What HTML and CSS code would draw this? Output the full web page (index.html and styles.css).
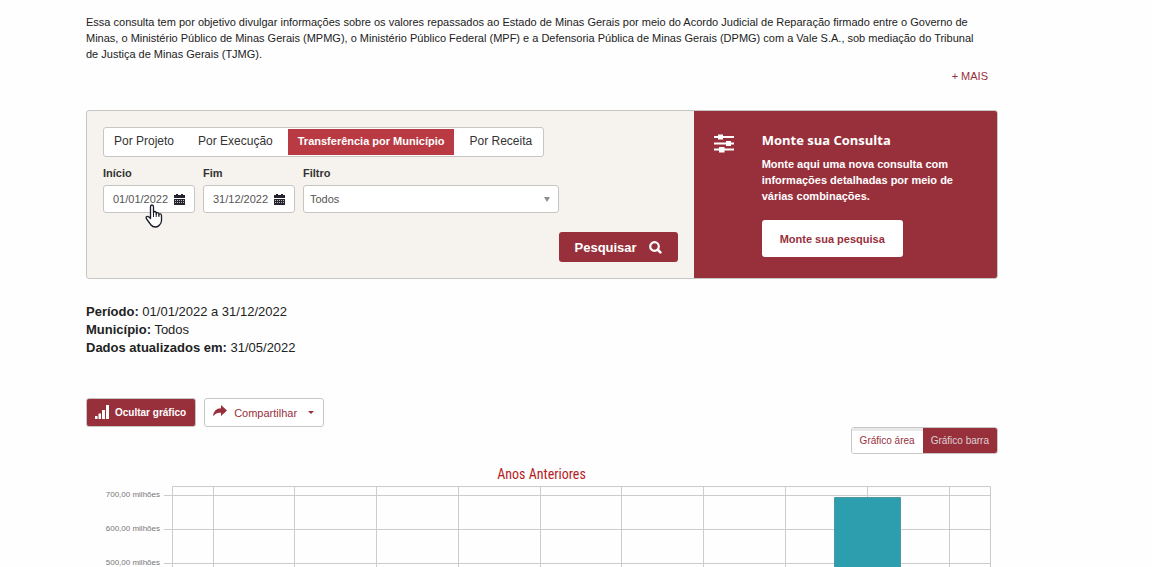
FILE: index.html
```html
<!DOCTYPE html>
<html lang="pt-BR">
<head>
<meta charset="utf-8">
<title>Transferência por Município</title>
<link rel="stylesheet" href="styles.css">
</head>
<body>
<main class="page">
  <p class="intro">Essa consulta tem por objetivo divulgar informações sobre os valores repassados ao Estado de Minas Gerais por meio do Acordo Judicial de Reparação firmado entre o Governo de Minas, o Ministério Público de Minas Gerais (MPMG), o Ministério Público Federal (MPF) e a Defensoria Pública de Minas Gerais (DPMG) com a Vale S.A., sob mediação do Tribunal de Justiça de Minas Gerais (TJMG).</p>
  <a class="more" href="#mais">+ MAIS</a>

  <section class="panel">
    <form class="search">
      <nav class="tabs">
        <a class="tab" href="#projeto">Por Projeto</a>
        <a class="tab" href="#execucao">Por Execução</a>
        <a class="tab tab-active" href="#municipio">Transferência por Município</a>
        <a class="tab" href="#receita">Por Receita</a>
      </nav>
      <div class="fields">
        <div class="field">
          <label for="inicio">Início</label>
          <div class="control date">
            <input id="inicio" type="text" value="01/01/2022">
            <svg class="calendar" viewBox="0 0 11 11" aria-hidden="true"><path d="M0 1h2V0h2v1h3V0h2v1h2v3H0zM0 5h11v6H0z" fill="#24242e"/><path d="M1 6.500h9M1 8.500h9" stroke="#b9b3b5" stroke-width="1" stroke-dasharray="1 1"/></svg>
          </div>
          <svg class="pointer" viewBox="0 0 18 24" aria-hidden="true"><path d="M5.500 14.500V3Q5.500 1 7 1t1.500 2v6q0-1.500 1.300-1.500T11.200 9v1q.1-1.400 1.300-1.400T13.900 10v1q.2-1.200 1.300-1.200t1.300 1.700v5q0 2.500-2 4.500-1.500 2-4 2-3 0-4.500-2L2 15.500q-1.500-1.700-.5-2.700t2.500.2z" fill="#fff" stroke="#1b1b2b" stroke-width="1.300" stroke-linejoin="round"/><path d="M8.500 9v4M11.200 10v3M13.900 11v2" stroke="#1b1b2b"/></svg>
        </div>
        <div class="field">
          <label for="fim">Fim</label>
          <div class="control date">
            <input id="fim" type="text" value="31/12/2022">
            <svg class="calendar" viewBox="0 0 11 11" aria-hidden="true"><path d="M0 1h2V0h2v1h3V0h2v1h2v3H0zM0 5h11v6H0z" fill="#24242e"/><path d="M1 6.500h9M1 8.500h9" stroke="#b9b3b5" stroke-width="1" stroke-dasharray="1 1"/></svg>
          </div>
        </div>
        <div class="field field-filter">
          <label for="filtro">Filtro</label>
          <div class="control">
            <select id="filtro"><option>Todos</option></select>
            <svg class="arrow" viewBox="0 0 6 5" aria-hidden="true"><path d="M0 0h6L3 5z" fill="#8d8d8d"/></svg>
          </div>
        </div>
      </div>
      <button class="btn-search" type="submit">Pesquisar
        <svg class="lens" viewBox="0 0 13 13" aria-hidden="true"><circle cx="5.500" cy="5.500" r="4.300" fill="none" stroke="#fff" stroke-width="2.200"/><path d="M8.600 8.600l2.800 2.800" stroke="#fff" stroke-width="2.600" stroke-linecap="round"/></svg>
      </button>
    </form>
    <aside class="custom">
      <svg class="sliders" viewBox="0 0 20 19" aria-hidden="true"><path d="M0 3h20M0 9.500h20M0 15.500h20" stroke="#fff" stroke-width="2"/><path d="M4 .5h5v5H4zM12 7h5v5h-5zM5 13h5.500v5.500H5z" fill="#fff"/></svg>
      <div class="custom-body">
        <h2>Monte sua Consulta</h2>
        <p>Monte aqui uma nova consulta com informações detalhadas por meio de várias combinações.</p>
        <button class="btn-custom" type="button">Monte sua pesquisa</button>
      </div>
    </aside>
  </section>

  <section class="summary">
    <div><strong>Período:</strong> 01/01/2022 a 31/12/2022</div>
    <div><strong>Município:</strong> Todos</div>
    <div><strong>Dados atualizados em:</strong> 31/05/2022</div>
  </section>

  <div class="actions">
    <button class="btn btn-hide" type="button">
      <svg class="signal" viewBox="0 0 14 16" aria-hidden="true"><path d="M0 11h2.500v3H0zM3.500 8.500H6V14H3.500zM7 5h3v9H7zM11 0h3v14h-3z" fill="#fff"/></svg>
      Ocultar gráfico</button>
    <button class="btn btn-share" type="button">
      <svg class="share" viewBox="0 0 14 16" aria-hidden="true"><path d="M8 0l6 5.500L8 11V7.800Q3 7 0 11.500 .5 3.500 8 3.300z" fill="#98303c"/></svg>
      Compartilhar
      <svg class="caret" viewBox="0 0 6 3" aria-hidden="true"><path d="M0 0h6L3 3z" fill="#98303c"/></svg>
    </button>
  </div>

  <div class="modes">
    <button class="mode" type="button">Gráfico área</button>
    <button class="mode mode-active" type="button">Gráfico barra</button>
  </div>

  <section class="chart">
    <h3>Anos Anteriores</h3>
    <div class="chart-row">
      <div class="scale"><span>700,00 milhões</span><span>600,00 milhões</span><span>500,00 milhões</span></div>
      <svg class="plot" viewBox="0 0 828 82" aria-hidden="true">
        <path d="M8.500 82V.5h818V82M0 9.500h827M0 43.500h827M0 77.500h827M49.500 0v82M130.500 0v82M212.500 0v82M294.500 0v82M376.500 0v82M457.500 0v82M539.500 0v82M621.500 0v82M703.500 0v82M785.500 0v82" fill="none" stroke="#ccc"/>
        <path d="M670.500 83V11.500h66V83" fill="#2d9eae" stroke="#4d98a6"/>
      </svg>
    </div>
  </section>
</main>
</body>
</html>
```
FILE: styles.css
```css
* { box-sizing: border-box; }
body {
  margin: 0;
  background: #fefefe;
  color: #222;
  font-family: "Liberation Sans", Arial, sans-serif;
  font-size: 11px;
}
button, input, select { font: inherit; margin: 0; }
button { cursor: pointer; }
a { text-decoration: none; }
svg { display: block; flex: none; }

.page {
  display: flex;
  flex-direction: column;
  height: 100vh;
  overflow: hidden;
  padding: 14px 154px 0 86px;
}
.page > * { flex: none; }
.intro { margin: 0; padding-right: 14px; line-height: 16px; }
.more {
  align-self: flex-end;
  margin: 6px 10px 0 0;
  line-height: 16px;
  color: #98303c;
}

.panel {
  display: grid;
  grid-template-columns: minmax(0, 2fr) minmax(0, 1fr);
  margin-top: 26px;
  border: 1px solid #c8c6c5;
  border-radius: 3px;
  background: #f6f3ee;
  overflow: hidden;
}
.search {
  display: flex;
  flex-direction: column;
  align-items: flex-start;
  padding: 16px;
}
.tabs {
  display: flex;
  padding: 1px;
  border: 1px solid #c8c6c5;
  border-radius: 3px;
  background: #fff;
}
.tab {
  padding: 0 12px 2px;
  line-height: 24px;
  font-size: 12px;
  color: #333;
}
.tab:first-child { padding-left: 9px; }
.tab:last-child { padding-right: 10px; }
.tab-active {
  margin: 0 3px;
  padding: 0 10px 2px;
  background: #b93a42;
  color: #fff;
  font-size: 11px;
  font-weight: bold;
}
.fields { display: flex; gap: 8px; align-self: stretch; margin-top: 8px; }
.field { position: relative; width: 92px; }
.field-filter { width: 256px; }
.field label { display: block; line-height: 16px; font-weight: bold; color: #333; }
.control {
  position: relative;
  display: flex;
  align-items: center;
  height: 28px;
  margin-top: 4px;
  border: 1px solid #c8c6c5;
  border-radius: 3px;
  background: #fff;
}
.control input, .control select {
  border: 0;
  outline: 0;
  background: transparent;
  color: #555;
  appearance: none;
}
.control input { width: 70px; padding: 0 0 0 9px; }
.control select { width: 100%; height: 100%; padding: 0 6px; }
.calendar { width: 11px; height: 11px; }
.arrow { position: absolute; right: 8px; width: 6px; height: 5px; }
.pointer { position: absolute; top: 39px; left: 42px; width: 18px; height: 24px; }
.btn-search {
  display: flex;
  align-items: center;
  gap: 12px;
  align-self: flex-end;
  margin-top: 19px;
  padding: 0 16px;
  height: 30px;
  border: 0;
  border-radius: 3px;
  background: #98303c;
  color: #fff;
  font-size: 13px;
  font-weight: bold;
}
.lens { width: 13px; height: 13px; }

.custom {
  display: flex;
  gap: 28px;
  padding: 19px 36px 21px 20px;
  background: #98303c;
  color: #fff;
}
.sliders { width: 20px; height: 19px; margin-top: 4px; }
.custom h2 {
  margin: 0;
  font: 700 13px/20px "Open Sans", sans-serif;
}
.custom p { margin: 6px 0 16px; line-height: 16px; font-weight: bold; }
.btn-custom {
  height: 37px;
  padding: 0 18px;
  border: 0;
  border-radius: 3px;
  background: #fff;
  color: #98303c;
  font-weight: bold;
}

.summary { margin-top: 24px; font-size: 13px; line-height: 18px; }

.actions { display: flex; gap: 8px; margin-top: 41px; }
.btn {
  display: flex;
  align-items: center;
  height: 29px;
  padding: 0 9px 0 8px;
  border: 1px solid #c8c6c5;
  border-radius: 3px;
}
.btn-hide {
  gap: 6px;
  background: #98303c;
  color: #fff;
  font-size: 10px;
  font-weight: bold;
}
.btn-share { gap: 7px; background: #fff; color: #98303c; }
.signal { width: 14px; height: 16px; }
.share { width: 14px; height: 16px; }
.caret { width: 6px; height: 3px; margin-left: 4px; }

.modes {
  display: flex;
  align-self: flex-end;
  border: 1px solid #c8c6c5;
  border-radius: 3px;
  overflow: hidden;
}
.mode {
  height: 25px;
  padding: 0 8px;
  border: 0;
  background: #fff;
  color: #98303c;
  font-size: 10px;
  box-shadow: inset 0 3px 0 #e8e8e8;
}
.mode-active { background: #98303c; color: #ddd0d2; box-shadow: none; }

.chart { padding-right: 6px; }
.chart h3 {
  margin: 10px 0 0 5px;
  text-align: center;
  color: #b51c24;
  font: 14px/20px "Roboto Condensed", Roboto, sans-serif;
}
.chart-row { display: flex; gap: 4px; margin-top: 1px; }
.scale {
  width: 74px;
  display: flex;
  flex-direction: column;
  gap: 22px;
  padding-top: 4px;
  text-align: right;
  font-size: 8px;
  line-height: 12px;
  color: #777;
  white-space: nowrap;
}
.plot { flex: 1 1 0; min-width: 0; }
```
